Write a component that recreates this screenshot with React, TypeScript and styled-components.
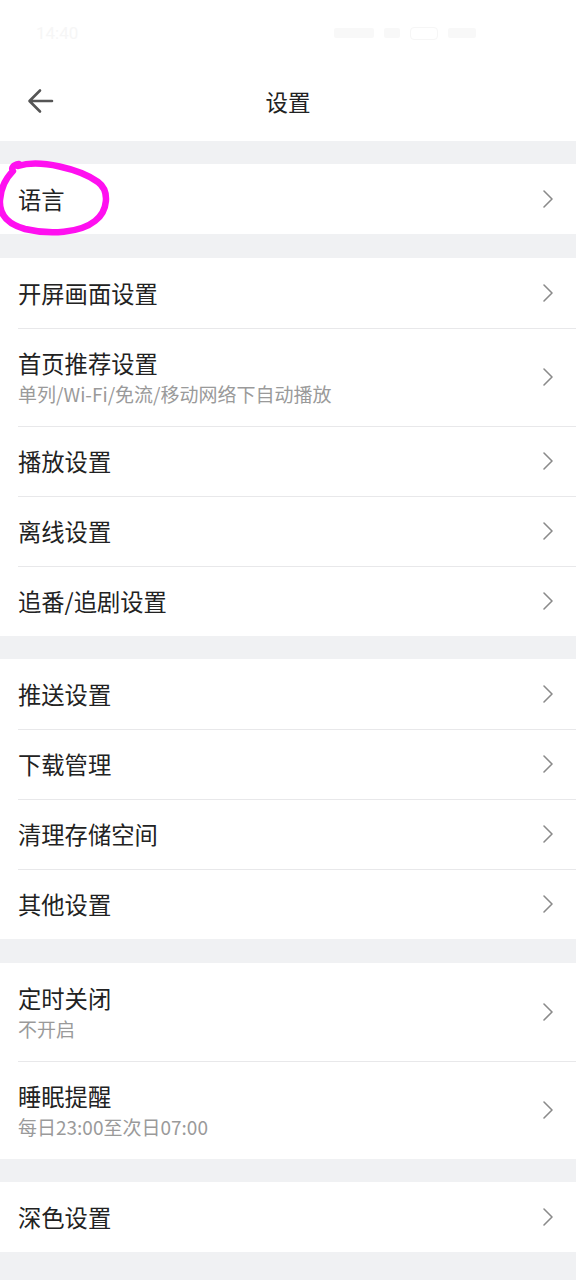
import React from 'react';
import styled, { createGlobalStyle } from 'styled-components';

const GlobalStyle = createGlobalStyle`
    html, body {
        margin: 0;
        padding: 0;
        background: #f0f1f3;
    }
    body {
        font-family: "Noto Sans CJK SC", "Noto Sans", sans-serif;
        -webkit-font-smoothing: antialiased;
    }
`;

type Item = { title: string; sub?: string; marked?: boolean };

const groups: Item[][] = [
    [{ title: '语言', marked: true }],
    [
        { title: '开屏画面设置' },
        { title: '首页推荐设置', sub: '单列/Wi-Fi/免流/移动网络下自动播放' },
        { title: '播放设置' },
        { title: '离线设置' },
        { title: '追番/追剧设置' },
    ],
    [
        { title: '推送设置' },
        { title: '下载管理' },
        { title: '清理存储空间' },
        { title: '其他设置' },
    ],
    [
        { title: '定时关闭', sub: '不开启' },
        { title: '睡眠提醒', sub: '每日23:00至次日07:00' },
    ],
    [{ title: '深色设置' }],
];

const Chevron = () => (
    <svg width="14" height="20" viewBox="0 0 14 20" fill="none">
        <path d="M3 2 L11 10 L3 18" stroke="#8a8a8a" strokeWidth="1.6" strokeLinecap="round" strokeLinejoin="round" />
    </svg>
);

const BackArrow = () => (
    <svg width="28" height="26" viewBox="0 0 28 26" fill="none">
        <path d="M25 13 H3 M13 2.5 L2.5 13 L13 23.5" stroke="#555" strokeWidth="2.6" strokeLinecap="round" strokeLinejoin="round" />
    </svg>
);

// hand drawn magenta ring around the first row
const Scribble = () => (
    <svg width="120" height="86" viewBox="0 0 120 86" fill="none">
        <path
            d="M20 9 C 42 2, 82 12, 100 25 C 112 34, 110 54, 97 64 C 82 76, 52 78, 27 72 C 9 67, 1 57, 2 43 C 3 29, 9 20, 15 14 C 13 11, 15 8, 21 7"
            stroke="#ff10f0"
            strokeWidth="6.5"
            strokeLinecap="round"
            strokeLinejoin="round"
        />
    </svg>
);

export default function App() {
    return (
        <Page>
            <GlobalStyle />
            <Top>
                <StatusBar>
                    <Clock>14:40</Clock>
                    <StatusRight>
                        <Faint $w={40} />
                        <Faint $w={16} />
                        <Battery />
                        <Faint $w={28} />
                    </StatusRight>
                </StatusBar>
                <Header>
                    <BackButton>
                        <BackArrow />
                    </BackButton>
                    <Title>设置</Title>
                </Header>
            </Top>
            {groups.map((group, gi) => (
                <Group key={gi}>
                    {group.map((item, ii) => (
                        <Row key={item.title} $tall={!!item.sub} $divider={ii > 0}>
                            <Texts>
                                <RowTitle>{item.title}</RowTitle>
                                {item.sub && <RowSub>{item.sub}</RowSub>}
                            </Texts>
                            <Chevron />
                            {item.marked && (
                                <Mark>
                                    <Scribble />
                                </Mark>
                            )}
                        </Row>
                    ))}
                </Group>
            ))}
        </Page>
    );
}

const Page = styled.div`
    width: 576px;
    min-height: 1280px;
    background: #f0f1f3;
    display: flex;
    flex-direction: column;
    gap: 23.4px;
`;

const Top = styled.div`
    background: #fff;
`;

const StatusBar = styled.div`
    height: 60px;
    display: flex;
    align-items: center;
    justify-content: space-between;
    padding: 6px 100px 0 36px;
    box-sizing: border-box;
`;

const Clock = styled.span`
    font-family: "Roboto", sans-serif;
    font-size: 17px;
    color: #f6f6f6;
`;

const StatusRight = styled.div`
    display: flex;
    align-items: center;
    gap: 10px;
`;

const Faint = styled.span<{ $w: number }>`
    width: ${p => p.$w}px;
    height: 10px;
    border-radius: 2px;
    background: #f8f8f8;
`;

const Battery = styled.span`
    width: 26px;
    height: 11px;
    border: 1.5px solid #f6f6f6;
    border-radius: 4px;
`;

const Header = styled.div`
    height: 81px;
    display: flex;
    align-items: center;
    justify-content: center;
    position: relative;
`;

const BackButton = styled.div`
    position: absolute;
    left: 27px;
    top: 28px;
    display: flex;
`;

const Title = styled.h1`
    margin: 0;
    font-size: 22.5px;
    font-weight: 400;
    color: #222;
`;

const Group = styled.div`
    background: #fff;
`;

const Row = styled.div<{ $tall: boolean; $divider: boolean }>`
    position: relative;
    height: ${p => (p.$tall ? 98 : 70)}px;
    display: flex;
    align-items: center;
    justify-content: space-between;
    padding: 0 21px 0 18px;
    box-sizing: border-box;
    &::before {
        content: '';
        display: ${p => (p.$divider ? 'block' : 'none')};
        position: absolute;
        top: 0;
        left: 18px;
        right: 0;
        height: 1px;
        background: #e8e8ea;
    }
`;

const Texts = styled.div`
    display: flex;
    flex-direction: column;
    gap: 4px;
`;

const RowTitle = styled.span`
    font-size: 23.3px;
    line-height: 30px;
    color: #222;
`;

const RowSub = styled.span`
    font-size: 19px;
    line-height: 24px;
    color: #9a9a9a;
`;

const Mark = styled.div`
    position: absolute;
    left: -2px;
    top: -7px;
    pointer-events: none;
`;
